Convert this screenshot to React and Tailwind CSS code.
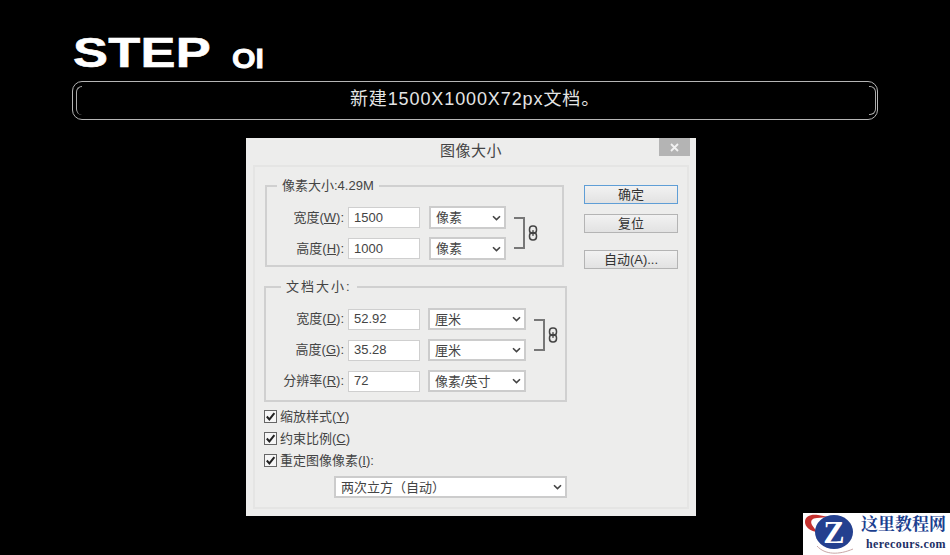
const cjk = { fontFamily: '"Liberation Sans", "Noto Sans CJK SC", sans-serif' };

function Chevron() {
  return (
    <svg width="9" height="6" viewBox="0 0 9 6" className="shrink-0">
      <path d="M1 1.2 L4.5 4.6 L8 1.2" fill="none" stroke="#444" strokeWidth="1.6" />
    </svg>
  );
}

function Field({ value }) {
  return (
    <div className="w-[72px] h-[21px] shrink-0 bg-white border border-[#cfcfcf] flex items-center pl-[5px] text-[13px] text-[#444]">
      {value}
    </div>
  );
}

function Dropdown({ value, className }) {
  return (
    <div className={`shrink-0 bg-white border-2 border-[#cccccc] flex items-center justify-between pl-[5px] pr-[3px] text-[13px] text-[#444] ${className}`}>
      <span className="mt-px">{value}</span>
      <Chevron />
    </div>
  );
}

function Label({ text, hot, suffix = ":", className }) {
  return (
    <div className={`text-right text-[13px] text-[#444] whitespace-nowrap shrink-0 ${className}`}>
      {text}(<span className="underline">{hot}</span>){suffix}
    </div>
  );
}

function Row({ text, hot, value, unit, labelW, selectClass, gapClass }) {
  return (
    <div className="flex items-center">
      <Label text={text} hot={hot} className={labelW} />
      <div className="ml-[4px]"><Field value={value} /></div>
      <div className={gapClass}><Dropdown value={unit} className={selectClass} /></div>
    </div>
  );
}

function Bracket() {
  return (
    <div className="flex items-center ml-[8px]">
      <div className="w-[11px] h-[32px] border-2 border-l-0 border-[#777]" />
      <svg width="10" height="16" viewBox="0 0 10 16" className="ml-[3px]">
        <rect x="1.5" y="1" width="7" height="7.5" rx="3.2" fill="none" stroke="#444" strokeWidth="1.5" />
        <rect x="1.5" y="7.5" width="7" height="7.5" rx="3.2" fill="none" stroke="#444" strokeWidth="1.5" />
        <path d="M5 5 V11" stroke="#444" strokeWidth="1.2" />
      </svg>
    </div>
  );
}

function Group({ title, className, legendClass, children }) {
  return (
    <fieldset className={`border-2 border-[#d0d0d0] ${className}`}>
      <legend className={`px-[5px] text-[13px] leading-[14px] text-[#444] ${legendClass}`}>{title}</legend>
      {children}
    </fieldset>
  );
}

function Check({ text, hot, suffix = "" }) {
  return (
    <div className="flex items-center h-[13px]">
      <div className="w-[13px] h-[13px] border border-[#666] bg-[#f6f6f6] flex items-center justify-center shrink-0">
        <svg width="11" height="11" viewBox="0 0 11 11">
          <path d="M1.8 5.5 L4.4 8.4 L9.4 2.2" fill="none" stroke="#222" strokeWidth="2" />
        </svg>
      </div>
      <span className="ml-[3px] text-[13px] text-[#444] whitespace-nowrap">
        {text}(<span className="underline">{hot}</span>){suffix}
      </span>
    </div>
  );
}

function Btn({ label, primary, className }) {
  return (
    <div className={`w-[94px] h-[19px] flex items-center justify-center text-[13px] text-[#333] bg-gradient-to-b from-[#f2f2f2] to-[#e2e2e2] border ${primary ? "border-[#5f9ed6]" : "border-[#b4b4b4]"} ${className}`}>
      {label}
    </div>
  );
}

function Watermark() {
  return (
    <div className="absolute right-0 bottom-0 w-[147px] h-[42px] bg-white flex">
      <svg width="52" height="42" viewBox="0 0 52 42" className="shrink-0">
        <path d="M2 9 C2 3 8 1 15 2 L26 4 L14 5 C9 5 7 8 9 12 L14 19 C7 18 2 14 2 9 Z" fill="#c5312f" />
        <ellipse cx="31" cy="19" rx="19" ry="17" fill="#24408f" />
        <text x="31" y="30" textAnchor="middle" fontFamily="Liberation Serif, serif" fontWeight="700" fontSize="32" fill="#fff">Z</text>
        <path d="M14 33 C22 42 36 42 50 36" fill="none" stroke="#c9a7a7" strokeWidth="1" />
      </svg>
      <div className="flex flex-col items-end pr-[4px] pl-[5px] grow" style={{ fontFamily: '"Liberation Serif", "Noto Serif CJK SC", "Noto Sans CJK SC", serif' }}>
        <div className="mt-[2px] text-[17px] leading-[20px] font-bold text-[#1b3f8f] whitespace-nowrap">这里教程网</div>
        <div className="mt-[2px] text-[12px] leading-[14px] font-bold tracking-[0.4px] text-[#1d2f66] whitespace-nowrap">herecours.com</div>
      </div>
    </div>
  );
}

export default function App() {
  return (
    <div className="relative w-[950px] h-[555px] bg-black overflow-hidden" style={cjk}>
      <div className="ml-[73px] pt-[26px] h-[81px] flex items-start text-white font-bold">
        <span className="text-[43px] leading-[52px] origin-left scale-x-[1.22] w-[137px] tracking-[0.2px] [-webkit-text-stroke:0.6px_white]">STEP</span>
        <span className="ml-[22px] mt-[17px] text-[27px] leading-[32px] origin-left scale-x-[1.12] [-webkit-text-stroke:0.8px_white]">OI</span>
      </div>
      <div className="relative ml-[72px] w-[806px] h-[39px] border-[1.5px] border-[#b5b5b5] rounded-[10px] flex items-center justify-center text-[18px] text-[#e4e4e4]">
        <div className="absolute left-[3px] top-[4px] bottom-[4px] w-[6px] border-l-[1.5px] border-t-[1.5px] border-[#aaa] rounded-tl-[6px] rounded-bl-[6px]" />
        <div className="absolute right-[1px] top-[4px] bottom-[4px] w-[7px] border-r-[1.5px] border-t-[1.5px] border-b-[1.5px] border-[#aaa] rounded-tr-[6px] rounded-br-[6px]" />
        <span className="-mt-[2px] tracking-[0.9px]">新建1500X1000X72px文档。</span>
      </div>

      <div className="ml-[246px] mt-[18px] w-[450px] h-[378px] bg-[#ededec] flex flex-col">
        <div className="relative h-[27px] shrink-0 flex items-center justify-center">
          <span className="text-[15px] tracking-[0.5px] text-[#444]">图像大小</span>
          <div className="absolute right-[6px] top-0 w-[31px] h-[18px] bg-[#b4b4b4] flex items-center justify-center">
            <svg width="9" height="9" viewBox="0 0 9 9"><path d="M1 1 L8 8 M8 1 L1 8" stroke="#f2f2f2" strokeWidth="1.8" /></svg>
          </div>
        </div>
        <div className="mx-[7px] h-[344px] border-2 border-[#e5e5e4] pl-[9px] pt-[12px] flex flex-col">
          <div className="flex items-start">
            <div className="ml-px w-[299px]">
              <Group title="像素大小:4.29M" className="h-[88px]" legendClass="ml-[10px]">
                <div className="mt-[13px] flex items-center">
                  <div className="flex flex-col gap-[8px]">
                    <Row text="宽度" hot="W" value="1500" unit="像素" labelW="w-[77px]" gapClass="ml-[9px]" selectClass="w-[77px] h-[23px]" />
                    <Row text="高度" hot="H" value="1000" unit="像素" labelW="w-[77px]" gapClass="ml-[9px]" selectClass="w-[77px] h-[23px]" />
                  </div>
                  <Bracket />
                </div>
              </Group>
            </div>
            <div className="ml-[20px] mt-[6px] flex flex-col">
              <Btn label="确定" primary />
              <Btn label="复位" className="mt-[10px]" />
              <Btn label="自动(A)..." className="mt-[17px]" />
            </div>
          </div>

          <Group title="文档大小:" className="mt-[11px] w-[303px] h-[122px]" legendClass="ml-[15px] tracking-[2px]">
            <div className="mt-[14px] flex items-center">
              <div className="flex flex-col gap-[9px]">
                <Row text="宽度" hot="D" value="52.92" unit="厘米" labelW="w-[78px]" gapClass="ml-[8px]" selectClass="w-[98px] h-[22px]" />
                <Row text="高度" hot="G" value="35.28" unit="厘米" labelW="w-[78px]" gapClass="ml-[8px]" selectClass="w-[98px] h-[22px]" />
              </div>
              <Bracket />
            </div>
            <div className="mt-[9px]">
              <Row text="分辨率" hot="R" value="72" unit="像素/英寸" labelW="w-[78px]" gapClass="ml-[8px]" selectClass="w-[98px] h-[22px]" />
            </div>
          </Group>

          <div className="mt-[8px] flex flex-col gap-[9px]">
            <Check text="缩放样式" hot="Y" />
            <Check text="约束比例" hot="C" />
            <Check text="重定图像像素" hot="I" suffix=":" />
          </div>
          <Dropdown value="两次立方（自动）" className="ml-[70px] mt-[9px] w-[233px] h-[22px]" />
        </div>
      </div>
      <Watermark />
    </div>
  );
}
